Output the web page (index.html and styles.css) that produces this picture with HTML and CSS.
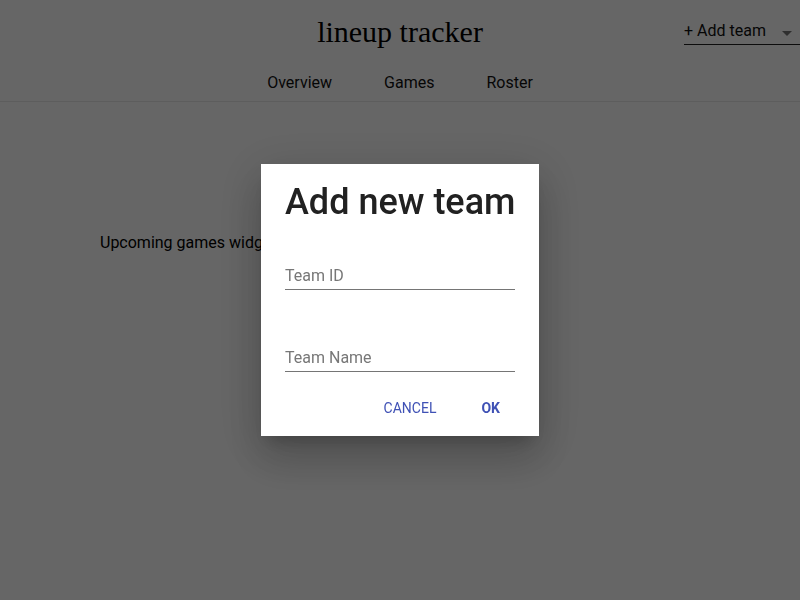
FILE: index.html
```html
<!DOCTYPE html>
<html>
<head>
<meta charset="utf-8">
<link rel="stylesheet" href="styles.css">
</head>
<body>
<header class="header">
  <div class="header-top">
    <div class="spacer"></div>
    <h1 class="app-title">lineup tracker</h1>
    <div class="team-select">
      <span class="team-select-text">+ Add team</span>
      <span class="team-select-arrow"></span>
    </div>
  </div>
  <nav class="tabs">
    <span class="tab">Overview</span>
    <span class="tab">Games</span>
    <span class="tab">Roster</span>
  </nav>
</header>
<main class="content">
  <p class="widget">Upcoming games widget</p>
</main>
<div class="overlay">
  <div class="dialog">
    <h2 class="dialog-title">Add new team</h2>
    <div class="field"><span class="field-label">Team ID</span></div>
    <div class="field"><span class="field-label">Team Name</span></div>
    <div class="actions">
      <span class="btn">CANCEL</span>
      <span class="btn btn-primary">OK</span>
    </div>
  </div>
</div>
</body>
</html>
```

FILE: styles.css
```css
html, body {
  margin: 0;
  padding: 0;
  background: #ffffff;
  font-family: Roboto, "Liberation Sans", sans-serif;
  color: #000;
}
.header {
  border-bottom: 1px solid #e8e8e8;
}
.header-top {
  display: grid;
  grid-template-columns: 1fr auto 1fr;
  align-items: start;
  height: 62px;
}
.app-title {
  margin: 14px 0 0 0;
  font-family: "Liberation Serif", serif;
  font-weight: normal;
  font-size: 30px;
  line-height: 36px;
}
.team-select {
  justify-self: end;
  width: 116px;
  margin-top: 18px;
  height: 27px;
  padding-top: 1px;
  border-bottom: 1px solid #222;
  display: flex;
  align-items: flex-start;
  justify-content: space-between;
  box-sizing: border-box;
}
.team-select-text {
  font-size: 16px;
  line-height: 24px;
  color: #111;
}
.team-select-arrow {
  width: 0;
  height: 0;
  border-left: 5px solid transparent;
  border-right: 5px solid transparent;
  border-top: 5px solid #777;
  margin-right: 8px;
  margin-top: 12px;
}
.tabs {
  display: flex;
  justify-content: center;
  height: 39px;
  align-items: center;
  padding-top: 2px;
  box-sizing: border-box;
}
.tab {
  font-size: 16px;
  padding: 0 26px;
  color: #111;
}
.content {
  padding: 0 100px;
}
.widget {
  margin: 131px 0 0 0;
  font-size: 16px;
}
.overlay {
  position: fixed;
  inset: 0;
  background: rgba(0, 0, 0, 0.6);
  display: flex;
  align-items: center;
  justify-content: center;
}
.dialog {
  width: 278px;
  height: 272px;
  box-sizing: border-box;
  background: #fff;
  padding: 17px 24px 0 24px;
  box-shadow: 0 11px 15px -7px rgba(0,0,0,0.2), 0 24px 38px 3px rgba(0,0,0,0.14), 0 9px 46px 8px rgba(0,0,0,0.12);
}
.dialog-title {
  margin: 0;
  font-size: 36px;
  font-weight: 500;
  line-height: 42px;
  color: #212121;
  white-space: nowrap;
}
.field {
  height: 82px;
  border-bottom: 1px solid #757575;
  box-sizing: border-box;
  display: flex;
  align-items: flex-end;
  padding-bottom: 4px;
}
.field:first-of-type {
  height: 67px;
}
.field-label {
  font-size: 16px;
  color: #777;
}
.actions {
  display: flex;
  justify-content: flex-end;
  margin-top: 28px;
  margin-right: 15px;
  gap: 45px;
}
.btn {
  font-size: 14px;
  color: #3f51b5;
}
.btn-primary {
  font-weight: bold;
}
```
